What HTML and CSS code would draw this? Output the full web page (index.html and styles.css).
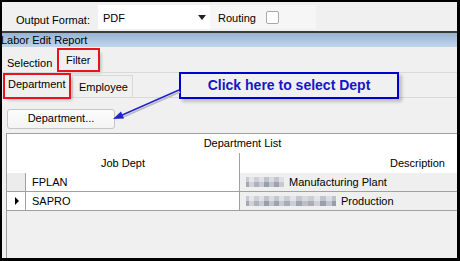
FILE: index.html
```html
<!DOCTYPE html>
<html lang="en">

<head>
  <meta charset="UTF-8" />
  <title>Labor Edit Report</title>
  <link rel="stylesheet" href="styles.css">
</head>
<body>
  <div class="window">
    <div class="toolbar">
      <span class="label">Output Format:</span>
      <div class="combo">
        <span>PDF</span>
        <span class="caret"></span>
      </div>
      <div class="routing">
        <span>Routing</span>
        <span class="check"></span>
      </div>
    </div>
    <div class="titlebar">Labor Edit Report</div>

    <div class="tabs outer-tabs">
      <div class="tab selection">Selection</div>
      <div class="tab filter marked">Filter</div>
    </div>

    <div class="page">
      <div class="tabs inner-tabs">
        <div class="tab dept marked">Department</div>
        <div class="tab emp">Employee</div>
      </div>

      <div class="inner-page">
        <button class="btn">Department...</button>

        <div class="grid">
          <div class="grid-title">Department List</div>
          <div class="grid-head">
            <div class="head-job">Job Dept</div>
            <div class="head-desc">Description</div>
          </div>
          <div class="grid-row">
            <div class="row-head shaded"></div>
            <div class="cell">FPLAN</div>
            <div class="cell desc"><span class="blur short"></span>Manufacturing Plant</div>
          </div>
          <div class="grid-row">
            <div class="row-head"><span class="pointer"></span></div>
            <div class="cell">SAPRO</div>
            <div class="cell desc"><span class="blur long"></span>Production</div>
          </div>
        </div>
      </div>
    </div>

    <div class="callout">Click here to select Dept</div>
    <svg class="arrow" width="460" height="261" viewBox="0 0 460 261">
      <line x1="180" y1="92" x2="121" y2="118" stroke="#b8b8c0" stroke-width="1.5" />
      <line x1="179" y1="90" x2="120" y2="116" stroke="#2323cc" stroke-width="1.5" />
      <polygon points="113,119 121,111.5 124,118.5" fill="#2323cc" />
    </svg>
  </div>
</body>
</html>
```

FILE: styles.css
```css
* {
  margin: 0;
  padding: 0;
  box-sizing: border-box;
}

body {
  width: 460px;
  height: 261px;
  overflow: hidden;
  font-family: 'Liberation Sans', Arial, sans-serif;
  font-size: 11px;
  color: #000;
}

.window {
  position: relative;
  width: 460px;
  height: 261px;
  background: #f0f0f0;
  border-top: 2px solid #000;
  border-right: 3px solid #000;
  border-bottom: 3px solid #000;
  border-left: 2px solid #000;
  overflow: hidden;
  display: flex;
  flex-direction: column;
}

/* top toolbar */
.toolbar {
  height: 31px;
  display: flex;
  align-items: center;
  padding-left: 14px;
  border-bottom: 2px solid #3a3a3a;
  flex-shrink: 0;
  white-space: nowrap;
}

.label {
  width: 82px;
  line-height: 24px;
  padding-top: 3px;
  height: 24px;
}

.combo {
  width: 112px;
  height: 24px;
  background: #fff;
  display: flex;
  align-items: center;
  justify-content: space-between;
  padding: 2px 4px 0 5px;
}

.caret {
  width: 0;
  height: 0;
  border-left: 4px solid transparent;
  border-right: 4px solid transparent;
  border-top: 5px solid #222;
}

.routing {
  width: 106px;
  height: 24px;
  background: #f6f6f6;
  display: flex;
  align-items: center;
  padding: 2px 0 0 8px;
}

.check {
  width: 13px;
  height: 13px;
  margin-left: 10px;
  margin-bottom: 1px;
  border: 1px solid #a8a8a8;
  border-radius: 2px;
  background: #fff;
}

.titlebar {
  height: 14px;
  line-height: 12px;
  padding-top: 1px;
  text-indent: -1px;
  background: linear-gradient(#98b4d1, #bfd6ed);
  white-space: nowrap;
  flex-shrink: 0;
}

/* tabs */
.tabs {
  display: flex;
  flex-shrink: 0;
}

.outer-tabs {
  height: 25px;
}

.tab {
  white-space: nowrap;
}

.marked {
  outline: 2px solid #e8141c;
  box-shadow: 3px 3px 3px rgba(0, 0, 0, 0.25);
}

.selection {
  margin-top: 6px;
  padding-left: 5px;
  width: 55px;
  line-height: 20px;
}

.filter {
  margin-top: 3px;
  margin-left: 2px;
  width: 39px;
  height: 20px;
  line-height: 20px;
  padding-left: 7px;
  background: #f0f0f0;
}

.page {
  flex: 1;
  display: flex;
  flex-direction: column;
  border-top: 1px solid #d9d9d9;
}

.inner-tabs {
  height: 24px;
}

.dept {
  margin-top: 2px;
  margin-left: 3px;
  width: 64px;
  height: 22px;
  line-height: 18px;
  padding-left: 3px;
  background: #f0f0f0;
  position: relative;
  z-index: 1;
}

.emp {
  margin-top: 2px;
  margin-left: 3px;
  width: 61px;
  height: 22px;
  border: 1px solid #d9d9d9;
  border-bottom: none;
  line-height: 20px;
  padding: 1px 0 0 6px;
}

.inner-page {
  flex: 1;
  display: flex;
  flex-direction: column;
  border-top: 1px solid #d9d9d9;
}

.btn {
  margin-top: 11px;
  margin-left: 5px;
  width: 108px;
  height: 20px;
  border: 1px solid #c6c6c6;
  border-radius: 3px;
  background: linear-gradient(#fdfdfd, #f4f4f4);
  font-family: inherit;
  font-size: 11px;
  line-height: 16px;
  padding-bottom: 2px;
  color: #000;
  text-align: center;
}

/* data grid */
.grid {
  flex: 1;
  margin-top: 4px;
  margin-left: 4px;
  width: 472px;
  border-top: 1px solid #a0a0a0;
  border-left: 1px solid #a0a0a0;
  background: #f0f0f0;
}

.grid-title {
  height: 19px;
  line-height: 19px;
  text-align: center;
  background: #fff;
}

.grid-head {
  display: grid;
  grid-template-columns: 232px 1fr;
  height: 20px;
  line-height: 20px;
  background: #fff;
}

.head-job {
  text-align: center;
}

.head-desc {
  border-left: 1px solid #a0a0a0;
  text-align: right;
  padding-right: 33px;
}

.grid-row {
  display: grid;
  grid-template-columns: 19px 213px 1fr;
  height: 19px;
  line-height: 18px;
  border-bottom: 1px solid #a0a0a0;
}

.row-head {
  background: #fff;
  border-right: 1px solid #a0a0a0;
  display: flex;
  align-items: center;
  padding-left: 8px;
}

.row-head.shaded {
  background: #ececec;
}

.pointer {
  width: 0;
  height: 0;
  border-top: 4px solid transparent;
  border-bottom: 4px solid transparent;
  border-left: 4px solid #000;
}

.cell {
  background: #fff;
  padding-left: 6px;
  white-space: nowrap;
}

.cell.desc {
  background: #efefef;
  border-left: 1px solid #a0a0a0;
  display: flex;
  align-items: center;
}

.blur {
  display: inline-block;
  height: 10px;
  margin-right: 5px;
  background:
    linear-gradient(rgba(255, 255, 255, 0.35) 0 5px, rgba(0, 0, 0, 0.03) 5px 10px),
    linear-gradient(90deg, #a9adba 0 3px, #d8d9de 3px 8px, #b5b7c2 8px 13px, #cfd1d8 13px 18px,
      #9ea3b2 18px 23px, #c8cad2 23px 28px, #a3a7b6 28px 33px, #cdd0d7 33px 38px,
      #aeb1bd 38px 44px, #d3d5db 44px 50px, #a5a9b7 50px 56px, #c2c5ce 56px 62px,
      #b0b3bf 62px 68px, #d6d7dc 68px 74px, #a0a4b3 74px 80px, #c9cbd3 80px 86px, #9da2b0 86px 90px);
}

.blur.short {
  width: 38px;
}

.blur.long {
  width: 90px;
}

/* annotation overlay */
.callout {
  position: absolute;
  left: 177px;
  top: 70px;
  width: 220px;
  height: 27px;
  border: 2px solid #0000cc;
  box-shadow: 3px 3px 3px rgba(0, 0, 0, 0.2);
  font-weight: bold;
  font-size: 14px;
  line-height: 23px;
  text-align: center;
  color: #1616c8;
}

.arrow {
  position: absolute;
  left: -2px;
  top: -2px;
  pointer-events: none;
}
```
